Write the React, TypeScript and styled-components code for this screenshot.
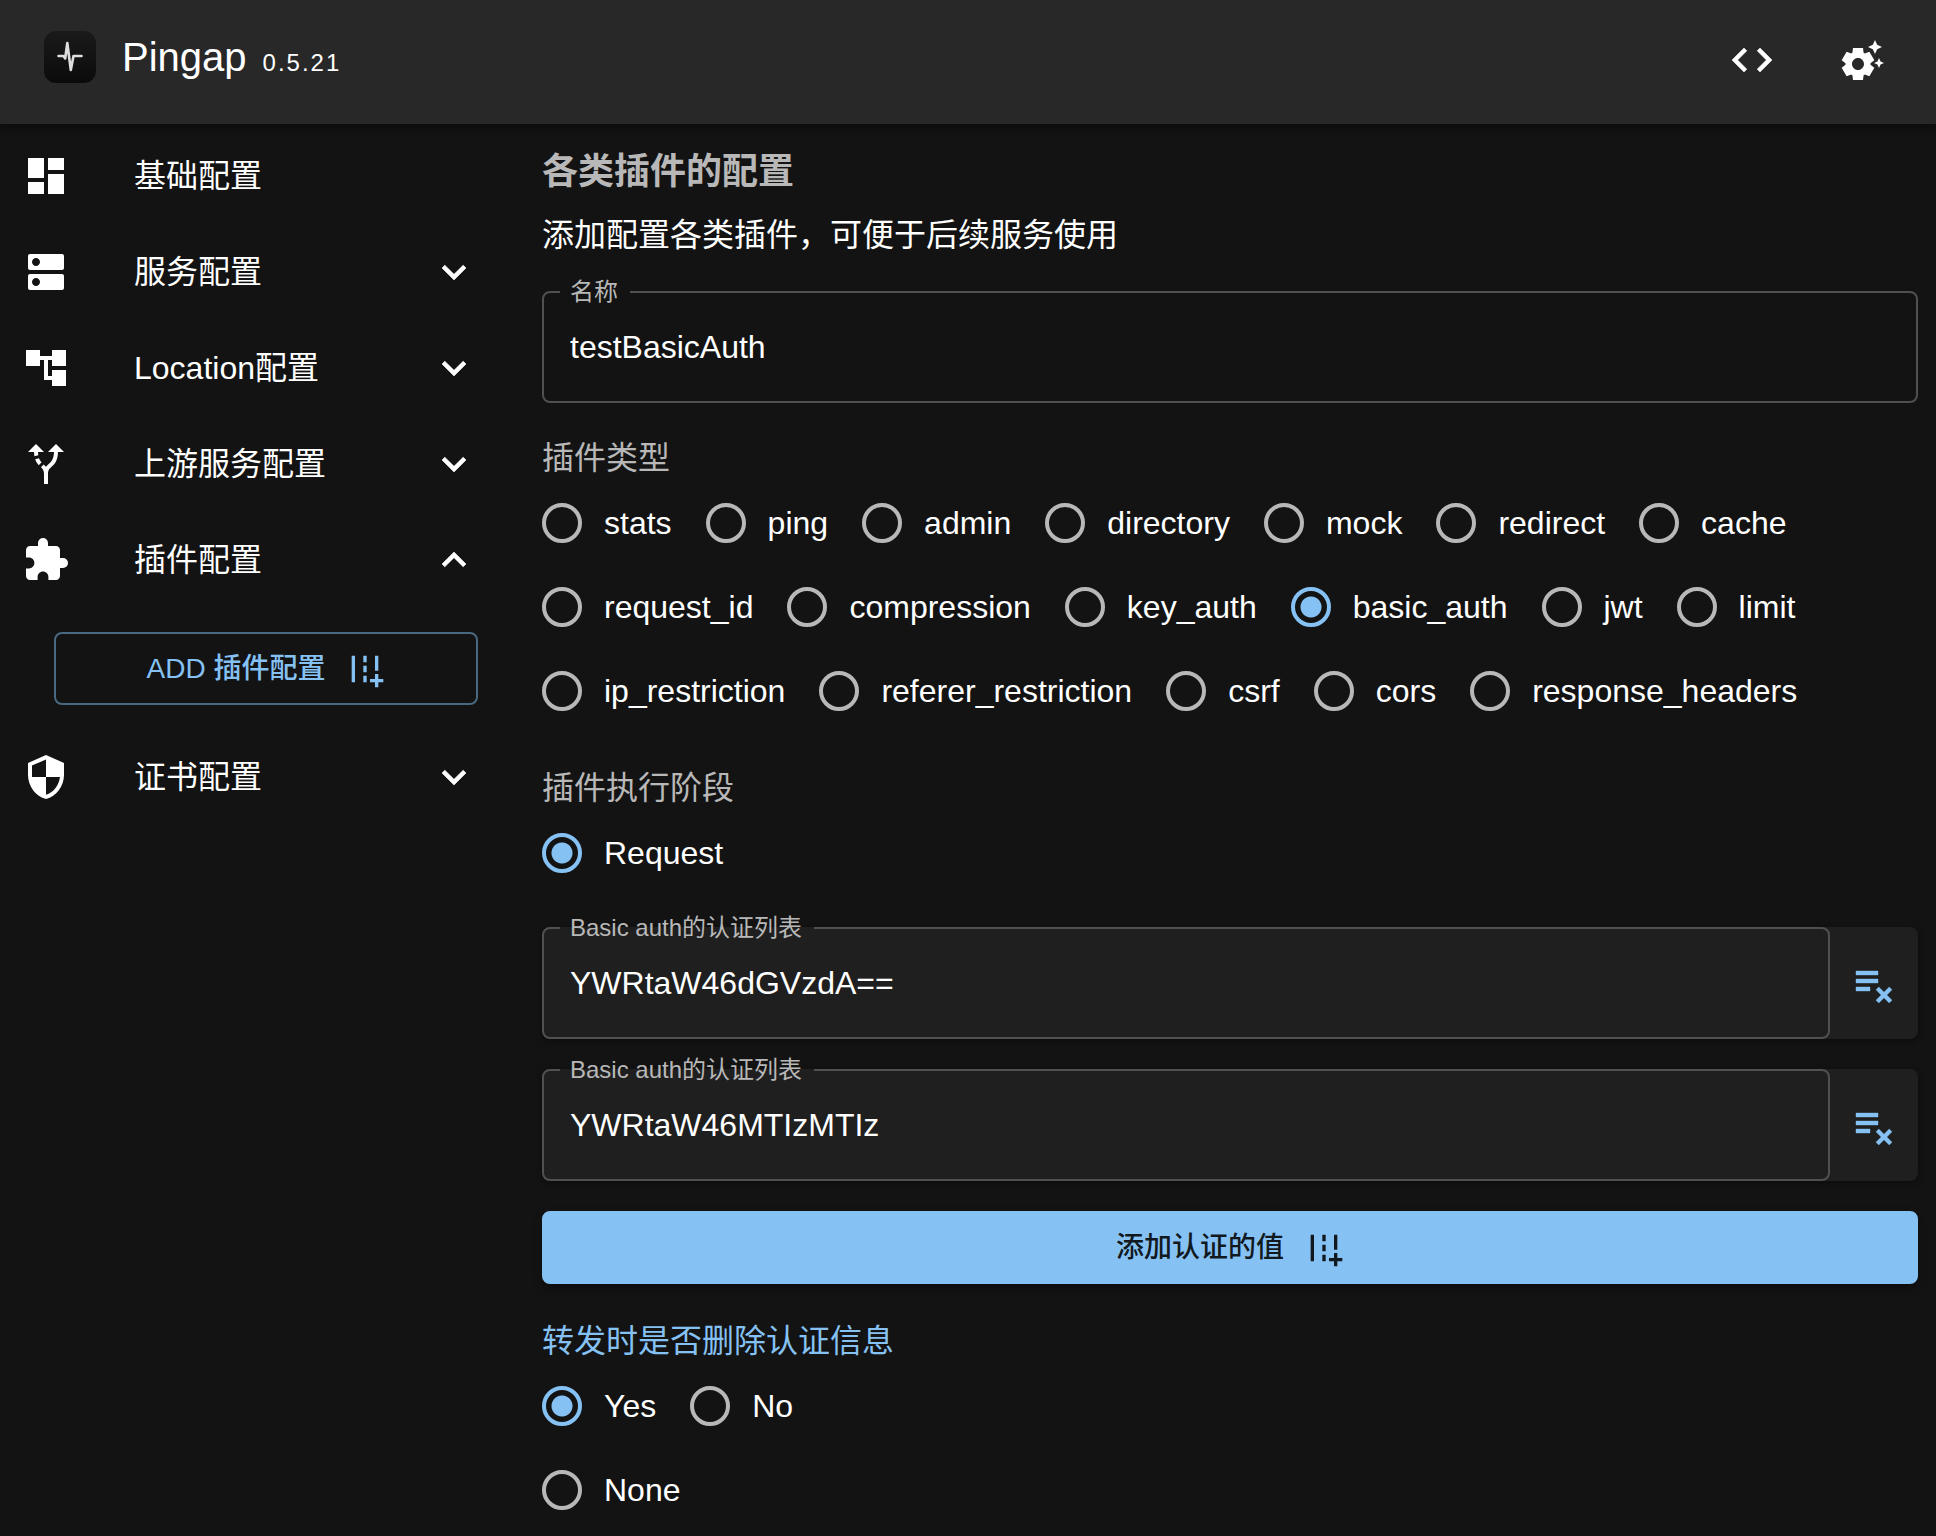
import React, { useState } from "react";
import styled, { createGlobalStyle } from "styled-components";
import {
  MdAccountTree,
  MdAddRoad,
  MdAltRoute,
  MdCode,
  MdDashboard,
  MdDns,
  MdExpandLess,
  MdExpandMore,
  MdExtension,
  MdPlaylistRemove,
  MdSecurity,
  MdSettingsSuggest,
} from "react-icons/md";

const colors = {
  page: "#131313",
  bar: "#282828",
  paper: "#1f1f1f",
  text: "#ffffff",
  muted: "#b8b8b8",
  outline: "#505050",
  primary: "#86c1f4",
  primaryOutline: "#4a687f",
  onPrimary: "#11191f",
};

const GlobalStyle = createGlobalStyle`
  * { box-sizing: border-box; }
  body {
    margin: 0;
    background: ${colors.page};
    color: ${colors.text};
    font-family: "Liberation Sans", "Noto Sans CJK SC", sans-serif;
    font-size: 32px;
    line-height: 48px;
  }
  button, input { font: inherit; color: inherit; }
  button { cursor: pointer; }
  svg { flex: none; display: block; stroke-linejoin: round; }
  /* Material icons carry an invisible bounding path that must stay unstroked. */
  button svg path[fill="none"] { stroke: none; }
`;

const TopBar = styled.header`
  position: relative;
  display: flex;
  align-items: center;
  height: 124px;
  padding: 0 26px 4px 44px;
  background: ${colors.bar};
  box-shadow: 0 4px 8px rgba(0, 0, 0, 0.4);
`;

const Brand = styled.div`
  display: flex;
  align-items: center;
  flex: 1;
  gap: 26px;
  padding-bottom: 6px;
`;

const BrandName = styled.h1`
  display: flex;
  align-items: baseline;
  gap: 16px;
  margin: 0;
  padding-top: 6px;
  font-size: 40px;
  font-weight: 400;
`;

const Version = styled.span`
  font-size: 24px;
  letter-spacing: 2px;
`;

const BarActions = styled.div`
  display: flex;
  gap: 14px;
`;

const IconButton = styled.button`
  display: flex;
  padding: 24px;
  border: 0;
  background: none;
`;

const Body = styled.div`
  display: flex;
`;

const Sidebar = styled.nav`
  flex: none;
  width: 500px;
  padding: 4px 22px;
`;

const NavList = styled.ul`
  margin: 0;
  padding: 0;
  list-style: none;
`;

const NavRow = styled.button`
  display: flex;
  align-items: center;
  gap: 64px;
  width: 100%;
  height: 96px;
  padding: 0;
  border: 0;
  background: none;
  text-align: left;
`;

const NavText = styled.span`
  flex: 1;
  white-space: nowrap;
`;

const ActionButton = styled.button<{ $filled?: boolean }>`
  display: flex;
  align-items: center;
  justify-content: center;
  gap: 20px;
  width: 100%;
  height: 73px;
  border: 2px solid ${(p) => (p.$filled ? colors.primary : colors.primaryOutline)};
  border-radius: 8px;
  background: ${(p) => (p.$filled ? colors.primary : "transparent")};
  color: ${(p) => (p.$filled ? colors.onPrimary : colors.primary)};
  font-size: 28px;
  font-weight: 500;
  box-shadow: ${(p) => (p.$filled ? "0 4px 8px rgba(0, 0, 0, 0.35)" : "none")};
`;

const SubMenu = styled.div`
  padding: 24px 0 24px 32px;
`;

const Main = styled.main`
  flex: 1;
  min-width: 0;
  padding: 24px 18px 4px 42px;
`;

const Title = styled.h2`
  margin: 0 0 16px;
  color: ${colors.muted};
  font-size: 36px;
  line-height: 47px;
  font-weight: 700;
`;

const Lead = styled.p`
  margin: 0;
`;

const Form = styled.form`
  display: flex;
  flex-direction: column;
  gap: 32px;
  padding-top: 32px;
`;

const FieldStack = styled.div`
  display: flex;
  flex-direction: column;
  gap: 30px;
  padding-bottom: 2px;
`;

const FieldPaper = styled.div`
  display: flex;
  border-radius: 8px;
  background: ${colors.paper};
  box-shadow: 0 2px 6px rgba(0, 0, 0, 0.4);
`;

/* The legend straddles the top border, so the box is pulled up by the part that sticks out. */
const Outline = styled.fieldset`
  flex: 1;
  min-width: 0;
  margin: -11px 0 0;
  padding: 0 16px 11px;
  border: 2px solid ${colors.outline};
  border-radius: 8px;
`;

const OutlineLegend = styled.legend`
  padding: 0 12px 0 10px;
  color: ${colors.muted};
  font-size: 24px;
  line-height: 24px;
`;

const TextInput = styled.input`
  display: block;
  width: 100%;
  height: 86px;
  padding: 0 10px;
  border: 0;
  outline: 0;
  background: none;
`;

const RemoveButton = styled.button`
  display: flex;
  align-items: center;
  justify-content: center;
  width: 88px;
  border: 0;
  background: none;
  color: ${colors.primary};
`;

const Columns = styled.div`
  display: grid;
  grid-template-columns: repeat(4, 1fr);
`;

const Group = styled.fieldset`
  min-width: 0;
  margin: 0;
  padding: 0;
  border: 0;
`;

const GroupLegend = styled.legend<{ $active?: boolean }>`
  padding: 0;
  color: ${(p) => (p.$active ? colors.primary : colors.muted)};
  line-height: 46px;
  white-space: nowrap;
`;

const Options = styled.div`
  display: flex;
  flex-wrap: wrap;
  column-gap: 34px;
`;

const Option = styled.label`
  display: flex;
  align-items: center;
  gap: 22px;
  height: 84px;
  cursor: pointer;
`;

const RadioInput = styled.input`
  appearance: none;
  flex: none;
  width: 40px;
  height: 40px;
  margin: 0;
  border: 4px solid ${colors.muted};
  border-radius: 50%;
  &:checked {
    border-color: ${colors.primary};
    background: radial-gradient(circle, ${colors.primary} 10px, transparent 11px);
  }
`;

function Logo() {
  return (
    <svg width="52" height="52" viewBox="0 0 52 52" aria-hidden="true">
      <defs>
        <linearGradient id="logo-bg" x1="0" y1="0" x2="0" y2="1">
          <stop offset="0" stopColor="#1a1a1a" />
          <stop offset="1" stopColor="#0b0b0b" />
        </linearGradient>
      </defs>
      <rect width="52" height="52" rx="12" fill="url(#logo-bg)" />
      <path
        d="M14.5 25h5l1.7 2.5L23.3 12l3.5 27L29.5 25h8"
        fill="none"
        stroke="#dedede"
        strokeWidth="2.6"
        strokeLinecap="round"
      />
    </svg>
  );
}

function NavItem({
  icon: Icon,
  label,
  expandable,
  open,
}: {
  icon: React.ComponentType<{ size?: number }>;
  label: string;
  expandable?: boolean;
  open?: boolean;
}) {
  const Chevron = open ? MdExpandLess : MdExpandMore;
  return (
    <NavRow type="button" aria-expanded={expandable ? !!open : undefined}>
      <Icon size={48} />
      <NavText>{label}</NavText>
      {expandable && <Chevron size={48} strokeWidth={0.3} />}
    </NavRow>
  );
}

function TextField({ id, label, value }: { id: string; label: string; value: string }) {
  return (
    <Outline>
      <OutlineLegend>
        <label htmlFor={id}>{label}</label>
      </OutlineLegend>
      <TextInput id={id} type="text" defaultValue={value} />
    </Outline>
  );
}

function RadioGroup({
  name,
  label,
  options,
  initial,
  active,
}: {
  name: string;
  label: string;
  options: string[];
  initial: string;
  active?: boolean;
}) {
  const [value, setValue] = useState(initial);
  return (
    <Group>
      <GroupLegend $active={active}>{label}</GroupLegend>
      <Options>
        {options.map((option) => (
          <Option key={option}>
            <RadioInput
              type="radio"
              name={name}
              value={option}
              checked={value === option}
              onChange={() => setValue(option)}
            />
            {option}
          </Option>
        ))}
      </Options>
    </Group>
  );
}

const categories = [
  "stats", "ping", "admin", "directory", "mock", "redirect", "cache",
  "request_id", "compression", "key_auth", "basic_auth", "jwt", "limit",
  "ip_restriction", "referer_restriction", "csrf", "cors", "response_headers",
];

const credentials = ["YWRtaW46dGVzdA==", "YWRtaW46MTIzMTIz"];

export default function App() {
  return (
    <>
      <GlobalStyle />
      <TopBar>
        <Brand>
          <Logo />
          <BrandName>
            Pingap <Version>0.5.21</Version>
          </BrandName>
        </Brand>
        <BarActions>
          <IconButton type="button" aria-label="code">
            <MdCode size={48} strokeWidth={0.3} />
          </IconButton>
          <IconButton type="button" aria-label="settings">
            <MdSettingsSuggest size={48} />
          </IconButton>
        </BarActions>
      </TopBar>
      <Body>
        <Sidebar>
          <NavList>
            <li><NavItem icon={MdDashboard} label="基础配置" /></li>
            <li><NavItem icon={MdDns} label="服务配置" expandable /></li>
            <li><NavItem icon={MdAccountTree} label="Location配置" expandable /></li>
            <li><NavItem icon={MdAltRoute} label="上游服务配置" expandable /></li>
            <li>
              <NavItem icon={MdExtension} label="插件配置" expandable open />
              <SubMenu>
                <ActionButton type="button">
                  ADD 插件配置
                  <MdAddRoad size={40} />
                </ActionButton>
              </SubMenu>
            </li>
            <li><NavItem icon={MdSecurity} label="证书配置" expandable /></li>
          </NavList>
        </Sidebar>
        <Main>
          <Title>各类插件的配置</Title>
          <Lead>添加配置各类插件，可便于后续服务使用</Lead>
          <Form>
            <TextField id="name" label="名称" value="testBasicAuth" />
            <RadioGroup name="category" label="插件类型" options={categories} initial="basic_auth" />
            <Columns>
              <RadioGroup name="step" label="插件执行阶段" options={["Request"]} initial="Request" />
            </Columns>
            <FieldStack>
              {credentials.map((value, index) => (
                <FieldPaper key={value}>
                  <TextField id={`auth-${index}`} label="Basic auth的认证列表" value={value} />
                  <RemoveButton type="button" aria-label="remove">
                    <MdPlaylistRemove size={48} strokeWidth={0.2} />
                  </RemoveButton>
                </FieldPaper>
              ))}
              <ActionButton type="button" $filled>
                添加认证的值
                <MdAddRoad size={40} />
              </ActionButton>
            </FieldStack>
            <Columns>
              <RadioGroup
                name="hide"
                label="转发时是否删除认证信息"
                options={["Yes", "No", "None"]}
                initial="Yes"
                active
              />
            </Columns>
          </Form>
        </Main>
      </Body>
    </>
  );
}
